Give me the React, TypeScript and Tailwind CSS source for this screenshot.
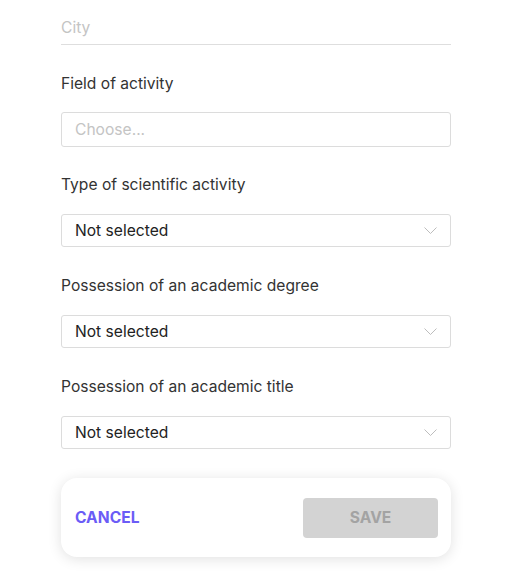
function Chevron() {
  return (
    <svg width="13" height="8" viewBox="0 0 13 8" fill="none" className="shrink-0">
      <path d="M0.5 0.5l6 6 6-6" stroke="#bdbdbd" strokeWidth="1" />
    </svg>
  );
}

function FieldLabel({ children }: { children: React.ReactNode }) {
  return <p className="mb-[19px] text-[15.6px] leading-5 text-[#333]">{children}</p>;
}

function SelectBox({ value }: { value: string }) {
  return (
    <div className="flex h-[33px] items-center justify-between rounded-[3px] border border-[#dcdcdc] bg-white pl-[13px] pr-[13px]">
      <span className="text-[15.6px] text-[#222]">{value}</span>
      <Chevron />
    </div>
  );
}

const selects = [
  "Type of scientific activity",
  "Possession of an academic degree",
  "Possession of an academic title",
];

export default function App() {
  return (
    <main className="min-h-[579px] w-full bg-white font-['Inter',sans-serif]">
      <div className="ml-[61px] w-[390px] pt-[11px]">
        <div className="flex h-[34px] items-center border-b border-[#dedede]">
          <span className="text-[15.6px] text-[#c4c4c4]">City</span>
        </div>

        <div className="mt-[29px]">
          <p className="mb-[18px] text-[15.6px] leading-5 text-[#333]">Field of activity</p>
          <div className="flex h-[35px] items-center rounded-[3px] border border-[#dcdcdc] px-[13px]">
            <span className="text-[15.6px] text-[#c4c4c4]">Choose...</span>
          </div>
        </div>

        {selects.map((label, i) => (
          <div key={label} className={i === 0 ? "mt-7" : "mt-[29px]"}>
            <FieldLabel>{label}</FieldLabel>
            <SelectBox value="Not selected" />
          </div>
        ))}

        <div className="mt-[29px] flex h-[79px] items-center justify-between rounded-2xl bg-white px-[13px] shadow-[0_2px_14px_rgba(0,0,0,0.12)]">
          <button className="pl-px text-[15.6px] font-bold text-[#6b5cf6]">CANCEL</button>
          <button className="h-[40px] w-[135px] rounded-[4px] bg-[#d3d3d3] text-[15.6px] font-bold text-[#a3a3a3]">
            SAVE
          </button>
        </div>
      </div>
    </main>
  );
}
